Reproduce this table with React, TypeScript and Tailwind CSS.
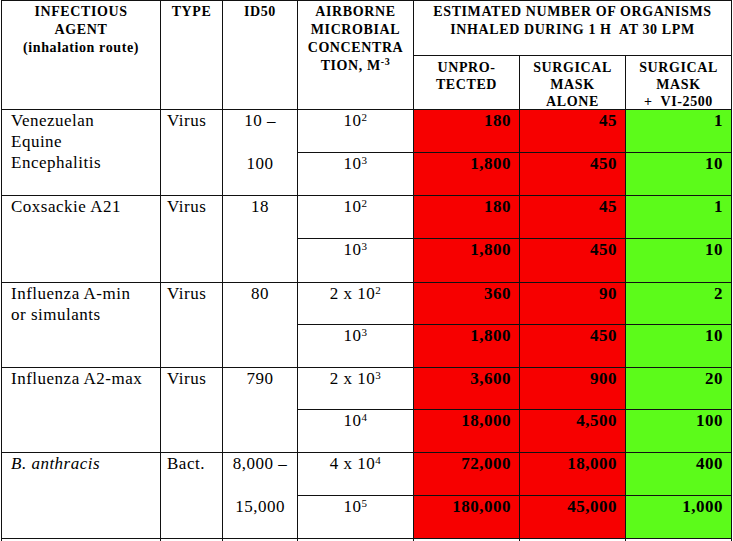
import React from "react";

type Sub = { conc: React.ReactNode; u: string; s: string; v: string; h: string };
type Row = { agent: React.ReactNode; type: string; id: [string, string]; subs: [Sub, Sub] };

const P = ({ base, exp }: { base: string; exp: string }) => (
  <>
    {base}
    <sup className="text-[11px]">{exp}</sup>
  </>
);

const rows: Row[] = [
  {
    agent: (
      <>
        Venezuelan
        <br />
        Equine
        <br />
        Encephalitis
      </>
    ),
    type: "Virus",
    id: ["10 –", "100"],
    subs: [
      { conc: <P base="10" exp="2" />, u: "180", s: "45", v: "1", h: "h-[43px]" },
      { conc: <P base="10" exp="3" />, u: "1,800", s: "450", v: "10", h: "h-[43px]" },
    ],
  },
  {
    agent: "Coxsackie A21",
    type: "Virus",
    id: ["18", ""],
    subs: [
      { conc: <P base="10" exp="2" />, u: "180", s: "45", v: "1", h: "h-[43px]" },
      { conc: <P base="10" exp="3" />, u: "1,800", s: "450", v: "10", h: "h-[44px]" },
    ],
  },
  {
    agent: (
      <>
        Influenza A-min
        <br />
        or simulants
      </>
    ),
    type: "Virus",
    id: ["80", ""],
    subs: [
      { conc: <P base="2 x 10" exp="2" />, u: "360", s: "90", v: "2", h: "h-[42px]" },
      { conc: <P base="10" exp="3" />, u: "1,800", s: "450", v: "10", h: "h-[43px]" },
    ],
  },
  {
    agent: "Influenza A2-max",
    type: "Virus",
    id: ["790", ""],
    subs: [
      { conc: <P base="2 x 10" exp="3" />, u: "3,600", s: "900", v: "20", h: "h-[42px]" },
      { conc: <P base="10" exp="4" />, u: "18,000", s: "4,500", v: "100", h: "h-[43px]" },
    ],
  },
  {
    agent: <i>B. anthracis</i>,
    type: "Bact.",
    id: ["8,000 –", "15,000"],
    subs: [
      { conc: <P base="4 x 10" exp="4" />, u: "72,000", s: "18,000", v: "400", h: "h-[43px]" },
      { conc: <P base="10" exp="5" />, u: "180,000", s: "45,000", v: "1,000", h: "h-[43px]" },
    ],
  },
];

const cell = "border border-[#111] align-top p-0";
const head = `${cell} text-center font-bold text-[14px] leading-[18px] tracking-[0.6px]`;
const num = `${cell} text-right font-bold text-[17px] leading-[21px] tracking-[0.5px] pr-[8px]`;
const txt = "text-[17px] leading-[21px] tracking-[0.5px]";

// fixed-height box so header text can't push the rows taller
const Box = ({ h, children }: { h: string; children: React.ReactNode }) => (
  <div className={`${h} pt-[2px] overflow-visible whitespace-nowrap`}>{children}</div>
);

export default function App() {
  return (
    <div className="bg-white w-[733px] h-[541px] overflow-hidden text-black font-['Liberation_Serif','Times_New_Roman',serif]">
      <table className="ml-[1px] border-collapse table-fixed w-[730px]">
        <colgroup>
          <col className="w-[159px]" />
          <col className="w-[62px]" />
          <col className="w-[75px]" />
          <col className="w-[116px]" />
          <col className="w-[106px]" />
          <col className="w-[106px]" />
          <col className="w-[106px]" />
        </colgroup>
        <tbody>
          <tr className="h-[55px]">
            <td rowSpan={2} className={head}>
              <Box h="h-[60px]">
                INFECTIOUS
                <br />
                AGENT
                <br />
                (inhalation route)
              </Box>
            </td>
            <td rowSpan={2} className={head}>
              <Box h="h-[60px]">TYPE</Box>
            </td>
            <td rowSpan={2} className={head}>
              <Box h="h-[60px]">ID50</Box>
            </td>
            <td rowSpan={2} className={head}>
              <Box h="h-[60px]">
                AIRBORNE
                <br />
                MICROBIAL
                <br />
                CONCENTRA
                <br />
                TION, M<sup className="text-[10px]">-3</sup>
              </Box>
            </td>
            <td colSpan={3} className={head}>
              <Box h="h-[40px]">
                ESTIMATED NUMBER OF ORGANISMS
                <br />
                INHALED DURING 1 H&nbsp; AT 30 LPM
              </Box>
            </td>
          </tr>
          <tr className="h-[54px]">
            <td className={head}>
              <Box h="h-[40px]">
                <div className="pt-[1px] leading-[17px]">
                  UNPRO-
                  <br />
                  TECTED
                </div>
              </Box>
            </td>
            <td className={head}>
              <Box h="h-[40px]">
                <div className="pt-[1px] leading-[17px]">
                  SURGICAL
                  <br />
                  MASK
                  <br />
                  ALONE
                </div>
              </Box>
            </td>
            <td className={head}>
              <Box h="h-[40px]">
                <div className="pt-[1px] leading-[17px]">
                  SURGICAL
                  <br />
                  MASK
                  <br />+&nbsp; VI-2500
                </div>
              </Box>
            </td>
          </tr>
          {rows.map((r, i) =>
            r.subs.map((s, j) => (
              <tr key={`${i}-${j}`} className={s.h}>
                {j === 0 && (
                  <>
                    <td rowSpan={2} className={`${cell} ${txt} pl-[9px]`}>
                      {r.agent}
                    </td>
                    <td rowSpan={2} className={`${cell} ${txt} pl-[6px]`}>
                      {r.type}
                    </td>
                    <td rowSpan={2} className={`${cell} ${txt} text-center`}>
                      <div className={r.subs[0].h}>{r.id[0]}</div>
                      <div>{r.id[1]}</div>
                    </td>
                  </>
                )}
                <td className={`${cell} ${txt} text-center`}>{s.conc}</td>
                <td className={`${num} bg-[#f70000]`}>{s.u}</td>
                <td className={`${num} bg-[#f70000]`}>{s.s}</td>
                <td className={`${num} bg-[#5cfb1a]`}>{s.v}</td>
              </tr>
            ))
          )}
          <tr className="h-[12px]">
            <td className={cell} />
            <td className={cell} />
            <td className={cell} />
            <td className={cell} />
            <td className={cell} />
            <td className={cell} />
            <td className={cell} />
          </tr>
        </tbody>
      </table>
    </div>
  );
}
